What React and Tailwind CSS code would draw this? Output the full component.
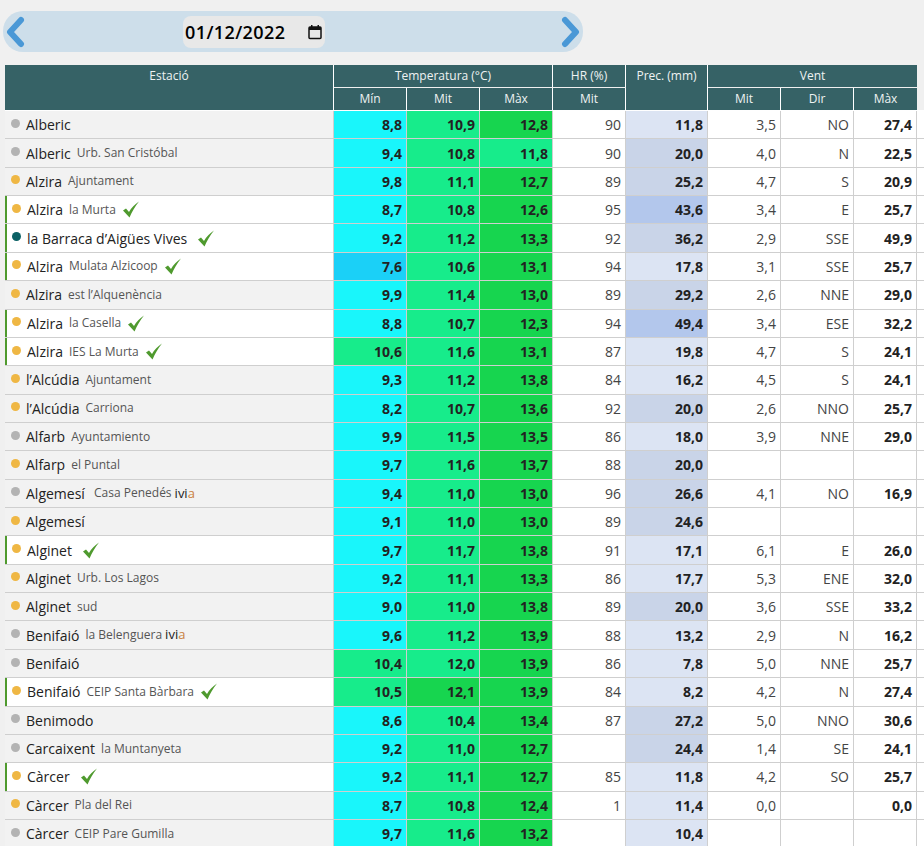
import { Check } from 'lucide-react'

const cols = 'grid grid-cols-[329px_73px_73px_73px_73px_82px_73px_73px_63px]'

// name, sub, dot (g = gray, o = orange, t = teal), selected, min, mit, max, hr, prec, vent mit, dir, max
const rows = [
  ['Alberic', '', 'g', 0, '8,8', '10,9', '12,8', '90', '11,8', '3,5', 'NO', '27,4'],
  ['Alberic', 'Urb. San Cristóbal', 'g', 0, '9,4', '10,8', '11,8', '90', '20,0', '4,0', 'N', '22,5'],
  ['Alzira', 'Ajuntament', 'o', 0, '9,8', '11,1', '12,7', '89', '25,2', '4,7', 'S', '20,9'],
  ['Alzira', 'la Murta', 'o', 1, '8,7', '10,8', '12,6', '95', '43,6', '3,4', 'E', '25,7'],
  ['la Barraca d’Aigües Vives', '', 't', 2, '9,2', '11,2', '13,3', '92', '36,2', '2,9', 'SSE', '49,9'],
  ['Alzira', 'Mulata Alzicoop', 'o', 1, '7,6', '10,6', '13,1', '94', '17,8', '3,1', 'SSE', '25,7'],
  ['Alzira', 'est l’Alquenència', 'o', 0, '9,9', '11,4', '13,0', '89', '29,2', '2,6', 'NNE', '29,0'],
  ['Alzira', 'la Casella', 'o', 1, '8,8', '10,7', '12,3', '94', '49,4', '3,4', 'ESE', '32,2'],
  ['Alzira', 'IES La Murta', 'o', 1, '10,6', '11,6', '13,1', '87', '19,8', '4,7', 'S', '24,1'],
  ['l’Alcúdia', 'Ajuntament', 'o', 0, '9,3', '11,2', '13,8', '84', '16,2', '4,5', 'S', '24,1'],
  ['l’Alcúdia', 'Carriona', 'o', 0, '8,2', '10,7', '13,6', '92', '20,0', '2,6', 'NNO', '25,7'],
  ['Alfarb', 'Ayuntamiento', 'g', 0, '9,9', '11,5', '13,5', '86', '18,0', '3,9', 'NNE', '29,0'],
  ['Alfarp', 'el Puntal', 'o', 0, '9,7', '11,6', '13,7', '88', '20,0', '', '', ''],
  ['Algemesí', ' Casa Penedés', 'g', 0, '9,4', '11,0', '13,0', '96', '26,6', '4,1', 'NO', '16,9', true],
  ['Algemesí', '', 'o', 0, '9,1', '11,0', '13,0', '89', '24,6', '', '', ''],
  ['Alginet', '', 'o', 2, '9,7', '11,7', '13,8', '91', '17,1', '6,1', 'E', '26,0'],
  ['Alginet', 'Urb. Los Lagos', 'o', 0, '9,2', '11,1', '13,3', '86', '17,7', '5,3', 'ENE', '32,0'],
  ['Alginet', 'sud', 'o', 0, '9,0', '11,0', '13,8', '89', '20,0', '3,6', 'SSE', '33,2'],
  ['Benifaió', 'la Belenguera', 'g', 0, '9,6', '11,2', '13,9', '88', '13,2', '2,9', 'N', '16,2', true],
  ['Benifaió', '', 'g', 0, '10,4', '12,0', '13,9', '86', '7,8', '5,0', 'NNE', '25,7'],
  ['Benifaió', 'CEIP Santa Bàrbara', 'o', 1, '10,5', '12,1', '13,9', '84', '8,2', '4,2', 'N', '27,4'],
  ['Benimodo', '', 'g', 0, '8,6', '10,4', '13,4', '87', '27,2', '5,0', 'NNO', '30,6'],
  ['Carcaixent', 'la Muntanyeta', 'g', 0, '9,2', '11,0', '12,7', '', '24,4', '1,4', 'SE', '24,1'],
  ['Càrcer', '', 'o', 2, '9,2', '11,1', '12,7', '85', '11,8', '4,2', 'SO', '25,7'],
  ['Càrcer', 'Pla del Rei', 'o', 0, '8,7', '10,8', '12,4', '1', '11,4', '0,0', '', '0,0'],
  ['Càrcer', 'CEIP Pare Gumilla', 'g', 0, '9,7', '11,6', '13,2', '', '10,4', '', '', ''],
]

const num = (s) => parseFloat(s.replace(',', '.'))

const tempBg = (s) => {
  const t = num(s)
  if (t < 8) return 'bg-[#1bd0f7]'
  if (t < 10) return 'bg-[#19f6fb]'
  if (t <= 12) return 'bg-[#17ec8b]'
  return 'bg-[#17d54f]'
}

const precBg = (s) => {
  const p = num(s)
  if (p < 20) return 'bg-[#dce4f3]'
  if (p < 40) return 'bg-[#c9d4e8]'
  return 'bg-[#b3c7ec]'
}

const dots = { g: 'bg-[#b3b3b3]', o: 'bg-[#efb744]', t: 'bg-[#0b6165]' }

function Tick({ wide }) {
  return (
    <svg viewBox="0 0 16 17" className={`h-[17px] w-4 shrink-0 ${wide ? 'ml-[11px]' : 'ml-[7px]'}`}>
      <path d="M0 9.5 L3 7.5 L6 11 C8 7 12 3 16 0.5 C12 5 9 11 6.5 16.5 Z" fill="#4f9a2e" />
    </svg>
  )
}

function Chevron({ flip }) {
  return (
    <svg viewBox="0 0 20 32" className="h-8 w-5">
      <polyline
        points={flip ? '5,4 16,16 5,28' : '15,4 4,16 15,28'}
        fill="none"
        stroke="#4a98d6"
        strokeWidth="6"
        strokeLinecap="round"
        strokeLinejoin="round"
      />
    </svg>
  )
}

function Num({ children, bg = '', bold = true }) {
  return (
    <div className={`flex items-center justify-end border-r border-[#cfcfcf] pr-[4px] text-[14px] ${bold ? 'font-bold text-[#222]' : 'text-[#444]'} ${bg}`}>
      {children}
    </div>
  )
}

function Row({ r }) {
  const [name, sub, dot, sel, min, mit, max, hr, prec, vm, dir, vx, ivia] = r
  return (
    <div className={`${cols} h-[28.36px] border-b border-[#cfcfcf] bg-white`}>
      <div className={`flex items-center border-r border-[#cfcfcf] ${sel ? 'border-l-2 border-l-[#4f9a2e] bg-white pl-[5px]' : 'bg-[#f2f2f2] pl-[6px]'}`}>
        <span className={`mb-[3px] size-[9px] shrink-0 rounded-full ${dots[dot]}`} />
        <span className="ml-[6px] whitespace-pre text-[14px] text-[#222]">{name}</span>
        {sub && <span className="ml-[6px] whitespace-pre text-[12px] text-[#555]">{sub}</span>}
        {ivia && (
          <span className="ml-[3px] text-[13px] text-[#222]">
            ivi<span className="text-[#c9803f]">a</span>
          </span>
        )}
        {sel > 0 && <Tick wide={sel === 2} />}
      </div>
      <Num bg={tempBg(min)}>{min}</Num>
      <Num bg={tempBg(mit)}>{mit}</Num>
      <Num bg={tempBg(max)}>{max}</Num>
      <Num bold={false}>{hr}</Num>
      <Num bg={precBg(prec)}>{prec}</Num>
      <Num bold={false}>{vm}</Num>
      <Num bold={false}>{dir}</Num>
      <Num>{vx}</Num>
    </div>
  )
}

function Head({ className = '', children }) {
  return (
    <div className={`flex justify-center bg-[#366266] text-[12px] text-[#eef2f2] ${className}`}>{children}</div>
  )
}

export default function App() {
  return (
    <div className="h-[846px] overflow-hidden bg-[#f0f0f0] font-['Open_Sans',sans-serif]">
      <div className="pl-[3px] pt-[11px]">
        <div className="flex h-[41px] w-[580px] items-center justify-between rounded-[20px] bg-[#cddeea] px-[3px]">
          <Chevron />
          <Chevron flip />
        </div>
      </div>
      {/* date field sits over the bar */}
      <div className="absolute left-[183px] top-[16px] flex h-[32px] w-[142px] items-center rounded-[8px] bg-[#e8e8e8] pl-[2px]">
        <span className="text-[18px] font-semibold tracking-[0.4px] text-black">01/12/2022</span>
        <svg viewBox="0 0 16 16" className="ml-[22px] size-[16px]">
          <rect x="2" y="3" width="12" height="11.5" rx="1" fill="none" stroke="#111" strokeWidth="1.5" />
          <rect x="2" y="3" width="12" height="3" fill="#111" />
          <rect x="4" y="1" width="1.5" height="2.5" fill="#111" />
          <rect x="10.5" y="1" width="1.5" height="2.5" fill="#111" />
        </svg>
      </div>

      <div className="ml-[5px] mt-[13px]">
        <div className={`${cols} grid-rows-[22px_22px] gap-y-px border-b border-white`}>
          <Head className="row-span-2 border-r border-white pt-[2px]">Estació</Head>
          <Head className="col-span-3 items-center border-r border-white">Temperatura (°C)</Head>
          <Head className="items-center border-r border-white">HR (%)</Head>
          <Head className="row-span-2 border-r border-white pt-[2px]">Prec. (mm)</Head>
          <Head className="col-span-3 items-center">Vent</Head>
          <Head className="items-center border-r border-white">Mín</Head>
          <Head className="items-center border-r border-white">Mit</Head>
          <Head className="items-center border-r border-white">Màx</Head>
          <Head className="items-center border-r border-white">Mit</Head>
          <Head className="items-center border-r border-white">Mit</Head>
          <Head className="items-center border-r border-white">Dir</Head>
          <Head className="items-center">Màx</Head>
        </div>
        {rows.map((r, i) => (
          <Row key={i} r={r} />
        ))}
      </div>
    </div>
  )
}
